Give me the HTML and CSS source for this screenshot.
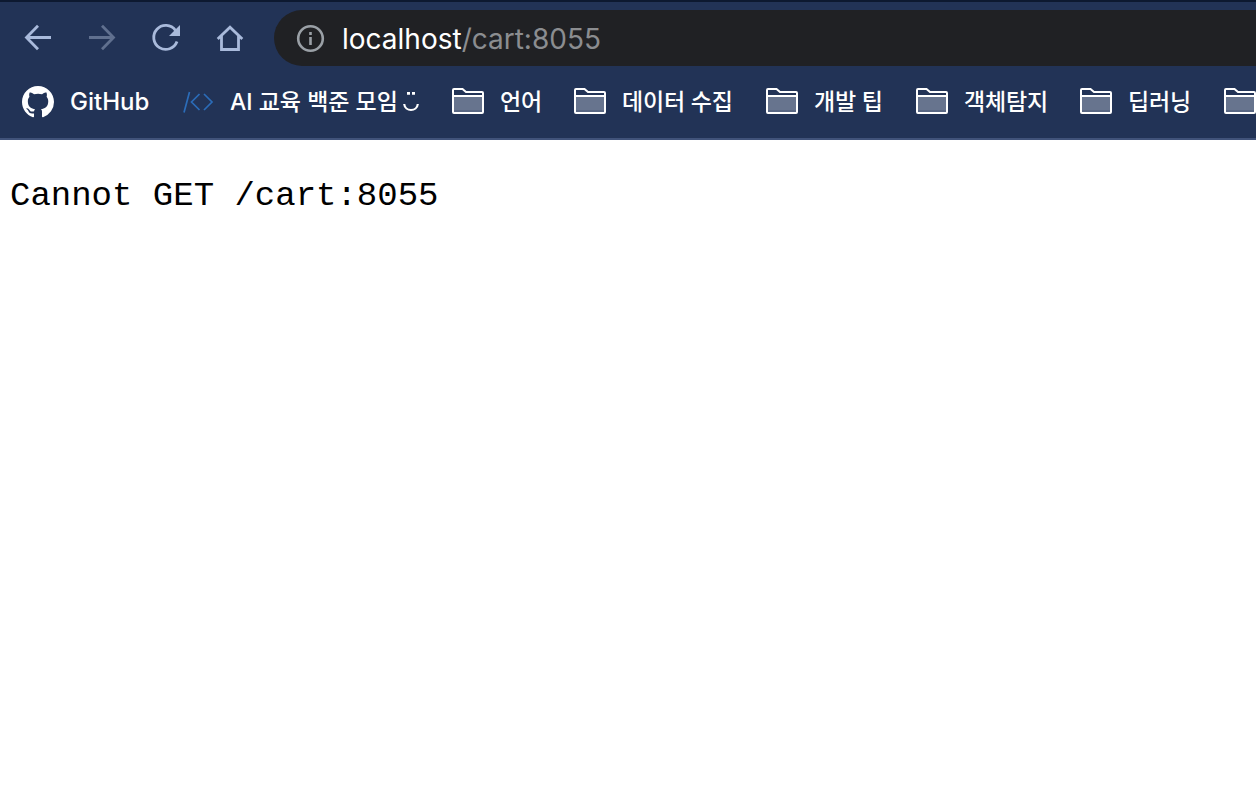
FILE: index.html
```html
<!DOCTYPE html>
<html lang="ko">
<head>
<meta charset="utf-8">
<title>Error</title>
<link rel="stylesheet" href="styles.css">
</head>
<body>
<svg class="defs" width="0" height="0"><defs>
  <symbol id="folder" viewBox="0 0 32 26">
    <path d="M1 8.500H31V24Q31 25 30 25H2Q1 25 1 24Z" fill="#67748e"/>
    <path d="M1 23H31" stroke="#596783" stroke-width="2"/>
    <path d="M1 8H31M2 1H10.500L14 4H30Q31 4 31 5V24Q31 25 30 25H2Q1 25 1 24V2Q1 1 2 1Z" fill="none" stroke="#fff" stroke-width="2"/>
  </symbol>
</defs></svg>
<header class="chrome">
  <div class="toolbar">
    <nav class="controls">
      <svg class="control" viewBox="0 0 32 32"><path d="M29 15.500H4.500M16 3.800L4.500 15.500L16 27.200"/></svg>
      <svg class="control disabled" viewBox="0 0 32 32"><path d="M3 15.500H27.500M16 3.800L27.500 15.500L16 27.200"/></svg>
      <svg class="control" viewBox="0 0 32 32"><path d="M25.500 8.400A12 12 0 1 0 27 19.500"/><path class="solid" d="M30 3V14H19Z"/></svg>
      <svg class="control" viewBox="0 0 32 32"><path d="M3.700 17L16 5.200L28.300 17M7.500 14V27.500H24.500V14"/></svg>
    </nav>
    <div class="address">
      <svg class="info" viewBox="0 0 28 28"><circle cx="14.500" cy="14.500" r="12.300"/><path d="M14.500 13V21M14.500 8V11"/></svg>
      <span class="url"><span class="host">localhost</span>/cart:8055</span>
    </div>
  </div>
  <nav class="bookmarks">
    <a class="bookmark github"><svg class="favicon" viewBox="0 0 16 16"><path fill="#fff" d="M8 0C3.580 0 0 3.580 0 8c0 3.540 2.290 6.530 5.470 7.590.4.070.55-.17.55-.38 0-.19-.01-.82-.01-1.490-2.010.37-2.530-.49-2.690-.94-.09-.23-.48-.94-.82-1.130-.28-.15-.68-.52-.01-.53.63-.01 1.080.58 1.230.82.72 1.210 1.870.87 2.330.66.07-.52.28-.87.51-1.070-1.780-.2-3.640-.89-3.640-3.950 0-.87.31-1.590.82-2.150-.08-.2-.36-1.020.08-2.120 0 0 .67-.21 2.200.82.64-.18 1.320-.27 2-.27s1.360.09 2 .27c1.530-1.040 2.200-.82 2.200-.82.44 1.100.16 1.920.08 2.120.51.56.82 1.270.82 2.150 0 3.070-1.870 3.750-3.650 3.950.29.25.54.73.54 1.480 0 1.070-.01 1.930-.01 2.200 0 .21.15.46.55.38A8.010 8.010 0 0 0 16 8c0-4.420-3.580-8-8-8z"/></svg><span class="label">GitHub</span></a>
    <a class="bookmark study"><svg class="favicon" viewBox="0 0 32 32"><path d="M2 26.500L7.500 6M17.500 8L9.500 16L17.500 24M22 8L30 16L22 24" fill="none" stroke="#2b6cb8" stroke-width="1.700"/></svg><span class="label">AI 교육 백준 모임</span><svg class="smile" viewBox="0 0 16 22"><path d="M1.200 13C2 21 14 21 14.800 13" fill="none" stroke="#fff" stroke-width="2.200"/><path d="M4 2.300h3M9 2.300h3" stroke="#fff" stroke-width="2.700"/></svg></a>
    <a class="bookmark language"><svg class="folder"><use href="#folder"/></svg><span class="label">언어</span></a>
    <a class="bookmark data"><svg class="folder"><use href="#folder"/></svg><span class="label">데이터 수집</span></a>
    <a class="bookmark tips"><svg class="folder"><use href="#folder"/></svg><span class="label">개발 팁</span></a>
    <a class="bookmark detection"><svg class="folder"><use href="#folder"/></svg><span class="label">객체탐지</span></a>
    <a class="bookmark learning"><svg class="folder"><use href="#folder"/></svg><span class="label">딥러닝</span></a>
    <a class="bookmark"><svg class="folder"><use href="#folder"/></svg></a>
  </nav>
</header>
<main class="page"><pre class="message">Cannot GET /cart:8055</pre></main>
</body>
</html>
```
FILE: styles.css
```css
* { box-sizing: border-box; }
body { margin: 0; height: 812px; overflow: hidden; background: #fff; }
.defs { position: absolute; }
.chrome { height: 140px; background: #223356; border-top: 2px solid #0d1930; border-bottom: 2px solid #41537a; overflow: hidden; }
.toolbar { display: flex; align-items: center; height: 72px; padding-left: 22px; }
.controls { display: flex; gap: 32px; width: 252px; flex: none; }
.control { width: 32px; height: 32px; fill: none; stroke: #a9badb; stroke-width: 2.800; }
.control .solid { fill: #a9badb; stroke: none; }
.disabled { stroke: #60708f; }
.address { flex: 1; display: flex; align-items: center; height: 56px; padding-left: 22px; gap: 18px; background: #202124; border-radius: 28px 0 0 28px; }
.info { width: 28px; height: 28px; fill: none; stroke: #9aa0a6; stroke-width: 2.600; flex: none; overflow: visible; }
.url { font: 28px/32px Inter, sans-serif; color: #8b8d90; white-space: nowrap; padding-top: 1px; }
.host { color: #fff; }
.bookmarks { display: flex; gap: 32px; padding-left: 22px; height: 56px; align-items: center; }
.bookmark { display: flex; align-items: center; gap: 16px; flex: none; height: 32px; color: #fff; white-space: nowrap; }
.favicon { width: 32px; height: 32px; flex: none; }
.folder { width: 32px; height: 26px; flex: none; margin-bottom: 2px; }
.label { font: 500 23px/32px Inter, "Noto Sans CJK KR", sans-serif; letter-spacing: -0.2px; }
.github { width: 128px; }
.github .label { font-size: 24px; letter-spacing: 0; }
.study { width: 238px; }
.study .label { width: 167px; letter-spacing: 0; }
.smile { width: 16px; height: 22px; margin-left: -10px; flex: none; }
.language { width: 90px; }
.data { width: 160px; }
.tips { width: 118px; }
.detection { width: 132px; }
.learning { width: 112px; }
.page { padding: 35px 10px; }
.message { margin: 0; font: 34px/42px "Liberation Mono", monospace; color: #000; }
```
